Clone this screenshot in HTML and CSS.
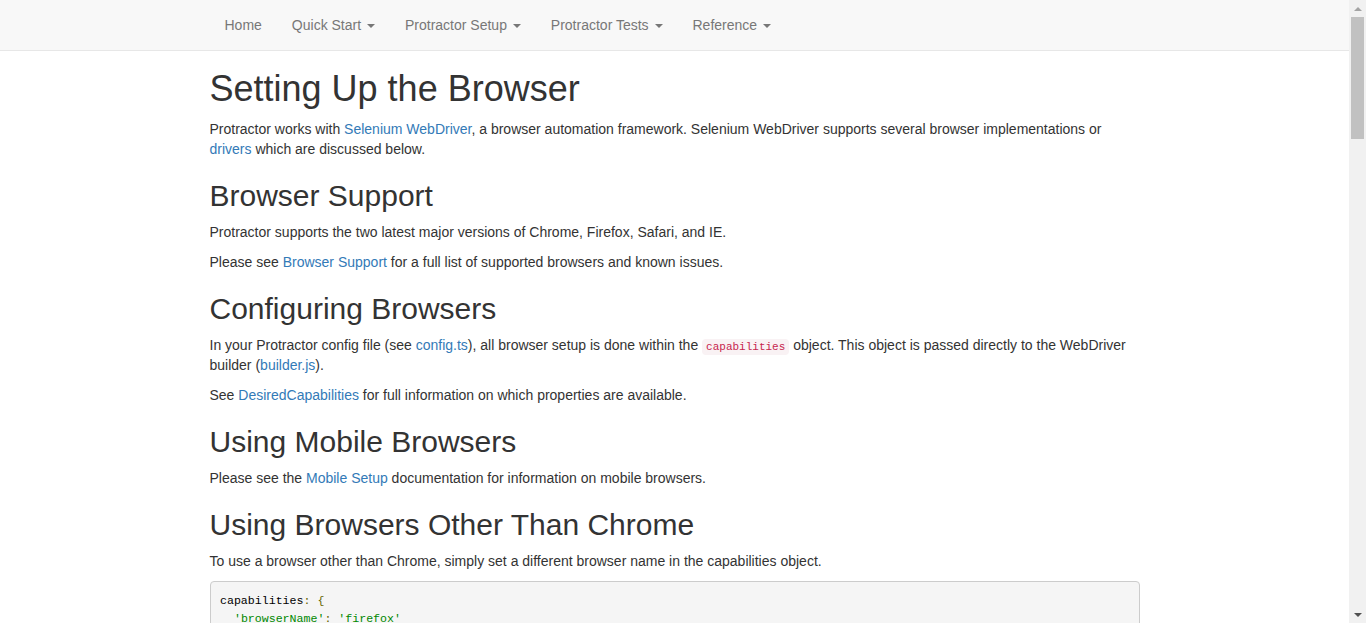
FILE: index.html
```html
<!DOCTYPE html>
<html lang="en">
<head>
<meta charset="utf-8">
<title>Setting Up the Browser</title>
<link rel="stylesheet" href="styles.css">
</head>
<body>
<div class="page">
  <nav class="navbar">
    <div class="container">
      <ul class="nav">
        <li><a href="#">Home</a></li>
        <li><a href="#">Quick Start <span class="caret"></span></a></li>
        <li><a href="#">Protractor Setup <span class="caret"></span></a></li>
        <li><a href="#">Protractor Tests <span class="caret"></span></a></li>
        <li><a href="#">Reference <span class="caret"></span></a></li>
      </ul>
    </div>
  </nav>
  <main class="container content">
    <h1>Setting Up the Browser</h1>
    <p>Protractor works with <a href="#">Selenium WebDriver</a>, a browser automation framework. Selenium WebDriver supports several browser implementations or <a href="#">drivers</a> which are discussed below.</p>

    <h2>Browser Support</h2>
    <p>Protractor supports the two latest major versions of Chrome, Firefox, Safari, and IE.</p>
    <p>Please see <a href="#">Browser Support</a> for a full list of supported browsers and known issues.</p>

    <h2>Configuring Browsers</h2>
    <p>In your Protractor config file (see <a href="#">config.ts</a>), all browser setup is done within the <code>capabilities</code> object. This object is passed directly to the WebDriver builder (<a href="#">builder.js</a>).</p>
    <p>See <a href="#">DesiredCapabilities</a> for full information on which properties are available.</p>

    <h2>Using Mobile Browsers</h2>
    <p>Please see the <a href="#">Mobile Setup</a> documentation for information on mobile browsers.</p>

    <h2>Using Browsers Other Than Chrome</h2>
    <p>To use a browser other than Chrome, simply set a different browser name in the capabilities object.</p>
<pre><span class="pln">capabilities</span><span class="pun">: {</span>
<span class="pln">  </span><span class="str">'browserName'</span><span class="pun">: </span><span class="str">'firefox'</span>
<span class="pun">}</span></pre>
    <p>You may need to install a separate binary to run another browser, such as IE or Android. For more information, see <a href="#">SeleniumHQ Downloads</a>.</p>
  </main>
</div>
<div class="scrollbar" aria-hidden="true">
  <div class="sb-btn"><span class="sb-arrow-up"></span></div>
  <div class="sb-track"><div class="sb-thumb"></div></div>
  <div class="sb-btn"><span class="sb-arrow-down"></span></div>
</div>
</body>
</html>
```

FILE: styles.css
```css
* { box-sizing: border-box; }

html, body {
  margin: 0;
  padding: 0;
  height: 100%;
  overflow: hidden;
}

body {
  display: flex;
  font-family: "Liberation Sans", Arial, Helvetica, sans-serif;
  font-size: 14px;
  line-height: 1.42857143;
  color: #333;
  background: #fff;
}

.page {
  flex: 1;
  min-width: 0;
  height: 100%;
  overflow: hidden;
}

a {
  color: #337ab7;
  text-decoration: none;
}

.container {
  width: 960px;
  margin: 0 auto;
  padding: 0 15px;
}

.navbar {
  height: 51px;
  background: #f8f8f8;
  border-bottom: 1px solid #e7e7e7;
}

.nav {
  display: flex;
  list-style: none;
  margin: 0;
  padding: 0;
}

.nav a {
  display: block;
  padding: 15px;
  line-height: 20px;
  color: #777;
}

.caret {
  display: inline-block;
  width: 0;
  height: 0;
  margin-left: 2px;
  vertical-align: middle;
  border-top: 4px solid #777;
  border-left: 4px solid transparent;
  border-right: 4px solid transparent;
}

.content {
  padding-top: 1px;
}

h1, h2 {
  font-family: inherit;
  font-weight: 500;
  line-height: 1.1;
  color: inherit;
  margin: 20px 0 10px;
}

.content h1 { margin-top: 17px; }

h1 { font-size: 36px; }
h2 { font-size: 30px; }

p { margin: 0 0 10px; }

code {
  font-family: "Liberation Mono", "DejaVu Sans Mono", monospace;
  font-size: 11px;
  padding: 2px 4px;
  color: #c7254e;
  background: #f9f2f4;
  border-radius: 4px;
}

pre {
  display: block;
  margin: 0 0 10px;
  padding: 9.5px;
  font-family: "Liberation Mono", "DejaVu Sans Mono", monospace;
  font-size: 11.6px;
  line-height: 18.57px;
  color: #333;
  background: #f5f5f5;
  border: 1px solid #ccc;
  border-radius: 4px;
  white-space: pre;
  overflow: auto;
}

.pln { color: #000; }
.pun { color: #660; }
.str { color: #080; }

/* emulated browser scrollbar */
.scrollbar {
  flex: 0 0 17px;
  height: 100%;
  display: flex;
  flex-direction: column;
  background: #f1f1f1;
}

.sb-btn {
  flex: 0 0 17px;
  display: flex;
  align-items: center;
  justify-content: center;
}

.sb-arrow-up {
  width: 0;
  height: 0;
  border-left: 4px solid transparent;
  border-right: 4px solid transparent;
  border-bottom: 4px solid #a3a3a3;
}

.sb-arrow-down {
  width: 0;
  height: 0;
  border-left: 4px solid transparent;
  border-right: 4px solid transparent;
  border-top: 4px solid #505050;
}

.sb-track {
  flex: 1;
  padding: 0 2px;
}

.sb-thumb {
  height: 122px;
  background: #c1c1c1;
}
```
